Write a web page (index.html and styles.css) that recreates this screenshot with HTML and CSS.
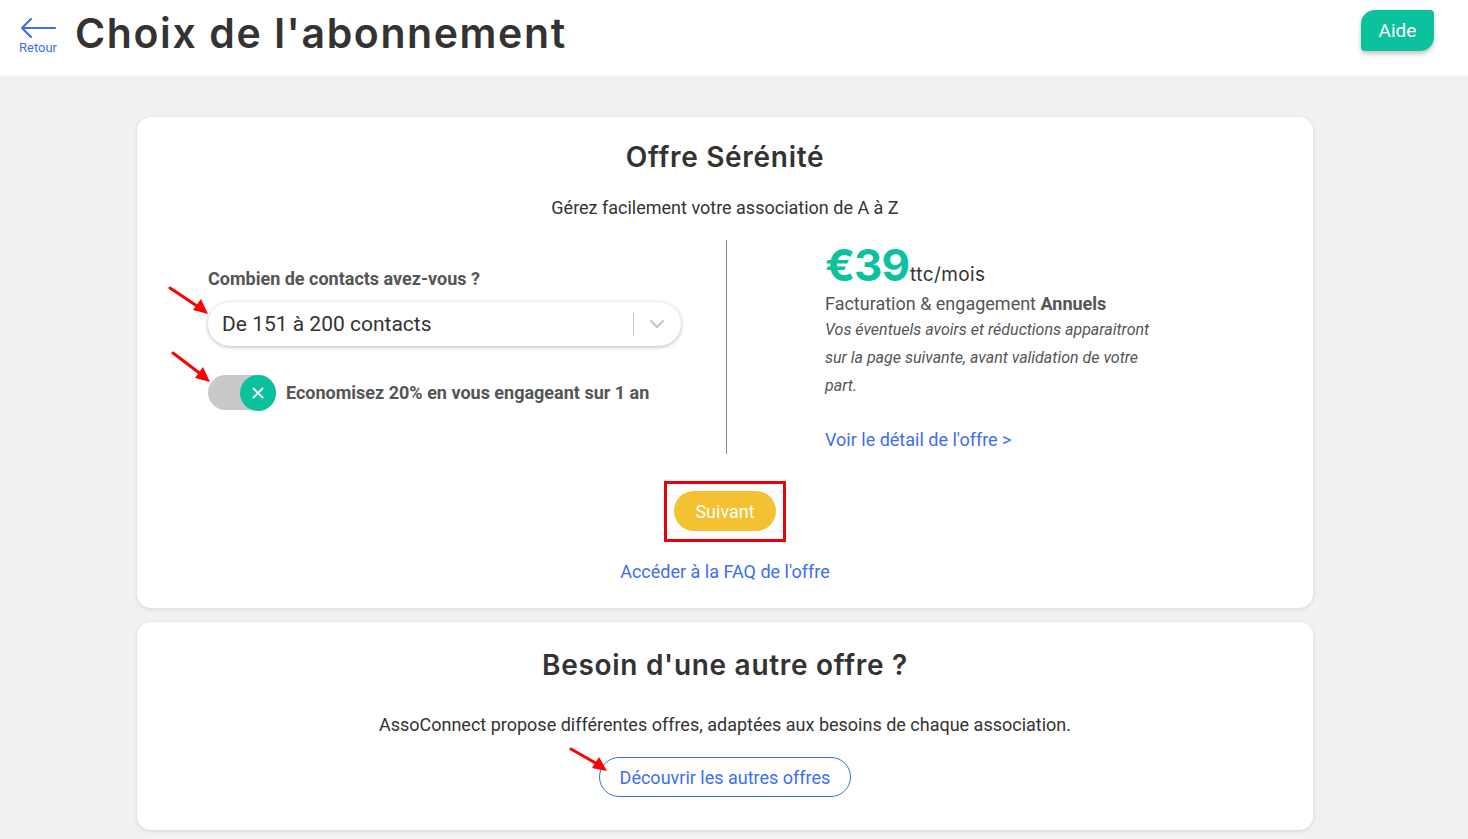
FILE: index.html
```html
<!DOCTYPE html>
<html lang="fr">
<head>
<meta charset="utf-8">
<title>Choix de l'abonnement</title>
<link rel="stylesheet" href="styles.css">
</head>
<body>
<header class="topbar">
  <a class="back" href="#">
    <svg class="back-icon" width="38" height="22" viewBox="0 0 38 22" fill="none" stroke="#3d6ef2" stroke-width="2.2" stroke-linecap="round" stroke-linejoin="round"><path d="M36 11H3M12 2L3 11l9 9"/></svg>
    <span class="back-label">Retour</span>
  </a>
  <h1 class="page-title">Choix de l'abonnement</h1>
  <button class="help-btn">Aide</button>
</header>

<main class="content">
  <section class="card offer">
    <h2 class="card-title">Offre Sérénité</h2>
    <p class="card-sub">Gérez facilement votre association de A à Z</p>
    <div class="offer-row">
      <div class="offer-left">
        <div class="field-label">Combien de contacts avez-vous ?</div>
        <div class="select">
          <span class="select-value">De 151 à 200 contacts</span>
          <span class="select-sep"></span>
          <svg class="select-chev" width="16" height="10" viewBox="0 0 16 10" fill="none" stroke="#c4c4c4" stroke-width="2" stroke-linecap="round" stroke-linejoin="round"><path d="M2 2l6 6 6-6"/></svg>
        </div>
        <div class="toggle-row">
          <span class="toggle">
            <span class="knob">
              <svg width="14" height="14" viewBox="0 0 14 14" stroke="#fff" stroke-width="1.8" stroke-linecap="round"><path d="M2.5 2.5l9 9M11.5 2.5l-9 9"/></svg>
            </span>
          </span>
          <span class="toggle-text">Economisez 20% en vous engageant sur 1 an</span>
        </div>
      </div>
      <div class="divider"></div>
      <div class="offer-right">
        <div class="price"><span class="amount">€39</span><span class="per">ttc/mois</span></div>
        <div class="billing">Facturation &amp; engagement <b>Annuels</b></div>
        <p class="note">Vos éventuels avoirs et réductions apparaitront sur la page suivante, avant validation de votre part.</p>
        <a class="link detail" href="#">Voir le détail de l'offre &gt;</a>
      </div>
    </div>
    <div class="next-wrap">
      <button class="next-btn">Suivant</button>
    </div>
    <a class="link faq" href="#">Accéder à la FAQ de l'offre</a>
  </section>

  <section class="card other">
    <h2 class="card-title">Besoin d'une autre offre ?</h2>
    <p class="other-text">AssoConnect propose différentes offres, adaptées aux besoins de chaque association.</p>
    <a class="outline-btn" href="#">Découvrir les autres offres</a>
  </section>
</main>

<svg class="annot a1" width="44" height="32" viewBox="0 0 44 32"><path d="M2 2L32 22" stroke="#f00" stroke-width="3" stroke-linecap="round"/><path d="M40 28L25 24l8-11z" fill="#f00"/></svg>
<svg class="annot a2" width="44" height="36" viewBox="0 0 44 36"><path d="M2 2L31 24" stroke="#f00" stroke-width="3" stroke-linecap="round"/><path d="M39 31L24 27l8-11z" fill="#f00"/></svg>
<svg class="annot a3" width="44" height="32" viewBox="0 0 44 32"><path d="M2 2L30 18" stroke="#f00" stroke-width="3" stroke-linecap="round"/><path d="M38 24L23 21l7-11z" fill="#f00"/></svg>
</body>
</html>
```
FILE: styles.css
```css
* { box-sizing: border-box; }
html, body { margin: 0; padding: 0; }
body {
  background: #f1f1f1;
  font-family: Roboto, "Liberation Sans", Arial, sans-serif;
  color: #333;
  width: 1468px;
  min-height: 839px;
  position: relative;
  overflow: hidden;
}
a { text-decoration: none; }
button { font-family: inherit; border: 0; cursor: pointer; }

.topbar {
  height: 76px;
  background: #fff;
  display: flex;
  align-items: center;
  padding: 0 34px 0 19px;
}
.back {
  display: flex;
  flex-direction: column;
  align-items: center;
  width: 38px;
  margin-top: -4px;
}
.back-icon { display: block; }
.back-label {
  font-size: 13px;
  color: #3d6ef2;
  margin-top: 1px;
  line-height: 15px;
}
.page-title {
  margin: 0 0 0 18px;
  font-family: Inter, "Open Sans", sans-serif;
  font-weight: 600;
  font-size: 41px;
  letter-spacing: 1.6px;
  color: #333;
  line-height: 1;
  padding-bottom: 10px;
}
.help-btn {
  margin-left: auto;
  margin-top: -16px;
  width: 73px;
  height: 41px;
  background: #0cc19e;
  color: #fff;
  font-size: 19px;
  border-radius: 14px 4px 14px 4px;
  box-shadow: 0 3px 4px rgba(0,0,0,0.22);
}

.content {
  padding: 41px 0 0 137px;
  display: flex;
  flex-direction: column;
  gap: 14px;
}
.card {
  width: 1176px;
  background: #fff;
  border-radius: 14px;
  box-shadow: 0 1px 4px rgba(0,0,0,0.12);
  display: flex;
  flex-direction: column;
  align-items: center;
}
.card-title {
  margin: 0;
  font-family: Inter, "Open Sans", sans-serif;
  font-weight: 600;
  font-size: 28px;
  letter-spacing: 0.7px;
  color: #333;
  line-height: 34px;
}
.offer { padding: 23px 0 17px; height: 491px; }
.card-sub {
  margin: 23px 0 0;
  font-size: 18px;
  line-height: 21px;
  color: #333;
}
.offer-row {
  align-self: stretch;
  display: flex;
  margin-top: 22px;
  padding-left: 71px;
  height: 214px;
}
.offer-left {
  width: 518px;
  padding: 28px 45px 0 0;
  display: flex;
  flex-direction: column;
}
.field-label {
  font-size: 18px;
  font-weight: 700;
  color: #555;
  line-height: 21px;
}
.select {
  margin-top: 13px;
  height: 44px;
  border-radius: 22px;
  background: #fff;
  box-shadow: 0 1px 4px rgba(0,0,0,0.28);
  display: flex;
  align-items: center;
  padding: 0 16px 0 14px;
}
.select-value {
  font-size: 21px;
  color: #333;
  flex: 1;
}
.select-sep {
  width: 1px;
  height: 23px;
  background: #c8c8c8;
  margin-right: 15px;
}
.select-chev { display: block; }
.toggle-row {
  margin-top: 29px;
  display: flex;
  align-items: center;
}
.toggle {
  position: relative;
  width: 68px;
  height: 35px;
  border-radius: 18px;
  background: #c9c9c9;
  display: flex;
  justify-content: flex-end;
  align-items: center;
}
.knob {
  width: 36px;
  height: 36px;
  border-radius: 50%;
  background: #0cc19e;
  display: flex;
  align-items: center;
  justify-content: center;
}
.toggle-text {
  margin-left: 10px;
  font-size: 18px;
  font-weight: 700;
  color: #555;
}
.divider {
  width: 1px;
  background: #888;
}
.offer-right {
  padding-left: 98px;
  display: flex;
  flex-direction: column;
}
.price {
  display: flex;
  align-items: baseline;
  height: 50px;
}
.amount {
  font-family: Inter, "Open Sans", sans-serif;
  font-weight: 700;
  font-size: 44px;
  color: #0cc19e;
  letter-spacing: -1px;
  line-height: 50px;
}
.per {
  font-family: Inter, "Open Sans", sans-serif;
  font-size: 19px;
  letter-spacing: 0.4px;
  color: #333;
  margin-left: 1px;
}
.billing {
  margin-top: 3px;
  font-size: 18px;
  color: #555;
  line-height: 21px;
}
.billing b { font-weight: 700; }
.note {
  margin: 2px 0 0;
  width: 345px;
  font-style: italic;
  font-size: 16px;
  line-height: 28px;
  color: #555;
}
.link {
  color: #3d6ef2;
  font-size: 18px;
  line-height: 21px;
}
.detail { margin-top: 29px; }
.next-wrap {
  margin-top: 27px;
  border: 3px solid #e8000b;
  padding: 7px 7px 8px;
}
.next-btn {
  display: block;
  width: 102px;
  height: 40px;
  border-radius: 20px;
  background: #f4c132;
  color: #fff;
  font-size: 18px;
}
.faq { margin-top: 19px; }

.other { padding: 26px 0 32px; height: 208px; }
.other-text {
  margin: 32px 0 0;
  font-size: 18px;
  color: #333;
  line-height: 21px;
}
.outline-btn {
  margin-top: 22px;
  height: 40px;
  padding: 0 20px;
  border: 1px solid #3d6ef2;
  border-radius: 20px;
  color: #3d6ef2;
  font-size: 18px;
  display: flex;
  align-items: center;
}

.annot { position: absolute; }
.a1 { left: 168px; top: 286px; }
.a2 { left: 171px; top: 351px; }
.a3 { left: 569px; top: 747px; }
```
